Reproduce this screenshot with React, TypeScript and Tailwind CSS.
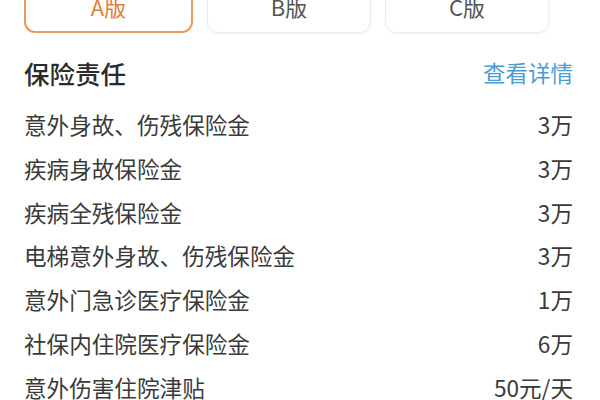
const rows: [string, string][] = [
  ['意外身故、伤残保险金', '3万'],
  ['疾病身故保险金', '3万'],
  ['疾病全残保险金', '3万'],
  ['电梯意外身故、伤残保险金', '3万'],
  ['意外门急诊医疗保险金', '1万'],
  ['社保内住院医疗保险金', '6万'],
  ['意外伤害住院津贴', '50元/天'],
];

const tabs = ['A版', 'B版', 'C版'];

export default function App() {
  return (
    <div className="h-[400px] w-[600px] overflow-hidden bg-white pl-[24px] pr-[27px] font-['Noto_Sans_CJK_SC',sans-serif] text-[#333]">
      <div className="-mt-[18px] flex h-[51px] gap-[14px]">
        {tabs.map((t, i) => (
          <div
            key={t}
            className={
              i === 0
                ? 'flex w-[169px] items-center justify-center rounded-[11px] border-2 border-[#e89a62] pb-[2px] text-[22px] text-[#e27d3a]'
                : 'flex w-[164px] items-center justify-center rounded-[11px] border border-[#ececec] pb-[2px] text-[22px] text-[#555] shadow-[0_1px_3px_rgba(0,0,0,0.05)]'
            }
          >
            {t}
          </div>
        ))}
      </div>

      <div className="mt-[20px] flex h-[40px] items-center justify-between">
        <h2 className="text-[25.5px] font-medium text-[#2b2b2b]">保险责任</h2>
        <a className="text-[22.5px] text-[#4c9cd4]">查看详情</a>
      </div>

      <ul className="mt-[10px]">
        {rows.map(([name, amount]) => (
          <li key={name} className="flex h-[43.8px] items-center justify-between text-[22.6px] text-[#3a3a3a]">
            <span>{name}</span>
            <span>{amount}</span>
          </li>
        ))}
      </ul>
    </div>
  );
}
